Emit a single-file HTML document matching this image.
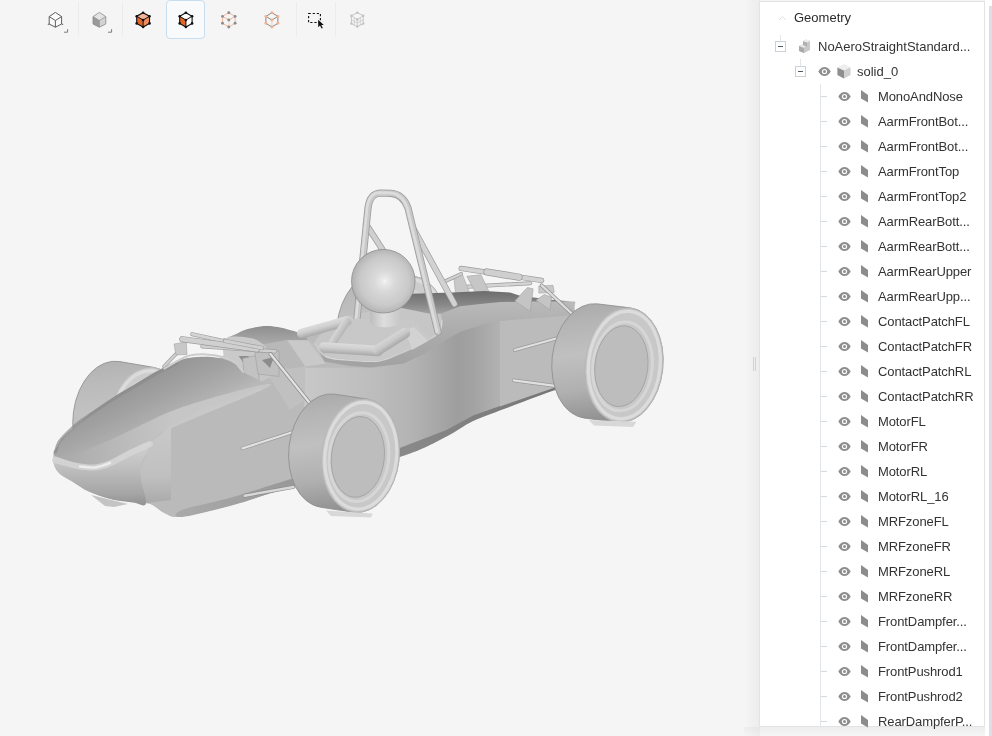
<!DOCTYPE html>
<html><head><meta charset="utf-8">
<style>
html,body{margin:0;padding:0;width:992px;height:736px;overflow:hidden;background:#f5f5f5;font-family:"Liberation Sans",sans-serif;}
#car{position:absolute;left:0;top:0;}
.tsep{position:absolute;top:2px;width:1px;height:34px;background:#ececec;}
#selbtn{position:absolute;left:166px;top:0px;width:39px;height:39px;border:1px solid #c6def0;border-radius:4px;background:#f9fafb;box-sizing:border-box;}
#pshadow{position:absolute;left:744px;top:0;width:16px;height:736px;background:linear-gradient(to right,rgba(0,0,0,0),rgba(0,0,0,0.035));}
#panel{position:absolute;left:759px;top:1px;width:226px;height:726px;background:#fff;border:1px solid #e3e3e3;box-sizing:border-box;}
#pbot{position:absolute;left:744px;top:727px;width:248px;height:9px;background:linear-gradient(to bottom,rgba(0,0,0,0.03),rgba(0,0,0,0));}
#sbtrack{position:absolute;left:985px;top:0;width:7px;height:736px;background:#fff;}
#sbthumb{position:absolute;left:989px;top:6px;width:3px;height:730px;background:#dcdfe4;}
#handle{position:absolute;left:753px;top:357px;width:1px;height:14px;background:#ccd3dc;box-shadow:2px 0 0 #ccd3dc;}
.hdr{position:absolute;left:794px;top:9px;font-size:13px;line-height:18px;color:#2b2b2b;}
.chev{position:absolute;left:778px;top:15px;}
.box{position:absolute;width:11px;height:11px;border:1px solid #c9d1db;box-sizing:border-box;background:#fff;}
.box:after{content:"";position:absolute;left:2px;top:4px;width:5px;height:1px;background:#4f5a66;}
.vl{position:absolute;width:1px;background:#e2e6eb;}
.cr{position:absolute;left:820px;height:25px;width:165px;}
.cr .tk{position:absolute;left:1px;top:12px;width:6px;height:1px;background:#d3d9e0;}
.cr .eye{position:absolute;left:18px;top:8px;}
.cr .face{position:absolute;left:41px;top:6px;}
.cr span{position:absolute;left:58px;top:0;line-height:25px;font-size:13px;letter-spacing:-0.1px;color:#333;white-space:nowrap;}
.nm{position:absolute;font-size:13px;line-height:25px;color:#333;white-space:nowrap;}
.cr,.nm,.hdr{will-change:transform;}
</style></head><body>
<svg id="car" width="760" height="736" viewBox="0 0 760 736" style="position:absolute;left:0;top:0"><defs>
<linearGradient id="gTread" x1="0" y1="0" x2="0.12" y2="1">
  <stop offset="0" stop-color="#a8a8a8"/><stop offset="0.18" stop-color="#b4b4b4"/><stop offset="0.45" stop-color="#c0c0c0"/><stop offset="0.75" stop-color="#b0b0b0"/><stop offset="1" stop-color="#939393"/>
</linearGradient>
<linearGradient id="gTreadFar" x1="0" y1="0" x2="0.12" y2="1">
  <stop offset="0" stop-color="#b0b0b0"/><stop offset="0.2" stop-color="#bababa"/><stop offset="0.45" stop-color="#c2c2c2"/><stop offset="0.75" stop-color="#b4b4b4"/><stop offset="1" stop-color="#9c9c9c"/>
</linearGradient>
<linearGradient id="gSide" x1="0" y1="0" x2="1" y2="0">
  <stop offset="0" stop-color="#c8c8c8"/><stop offset="0.35" stop-color="#bdbdbd"/><stop offset="0.55" stop-color="#b3b3b3"/><stop offset="0.78" stop-color="#9e9e9e"/><stop offset="0.86" stop-color="#a2a2a2"/><stop offset="1" stop-color="#b2b2b2"/>
</linearGradient>
<linearGradient id="gNoseTop" x1="0" y1="0" x2="0.25" y2="1">
  <stop offset="0" stop-color="#9c9c9c"/><stop offset="0.5" stop-color="#a9a9a9"/><stop offset="1" stop-color="#b6b6b6"/>
</linearGradient>
<radialGradient id="gHead" cx="0.52" cy="0.5" r="0.55">
  <stop offset="0" stop-color="#f6f6f6"/><stop offset="0.07" stop-color="#eaeaea"/><stop offset="0.3" stop-color="#d9d9d9"/><stop offset="0.7" stop-color="#c9c9c9"/><stop offset="0.9" stop-color="#b6b6b6"/><stop offset="1" stop-color="#a2a2a2"/>
</radialGradient>
<linearGradient id="gFloor" x1="0" y1="0" x2="1" y2="0">
  <stop offset="0" stop-color="#aaaaaa"/><stop offset="0.5" stop-color="#8c8c8c"/><stop offset="1" stop-color="#727272"/>
</linearGradient>
<linearGradient id="gChin" x1="0" y1="0" x2="0" y2="1">
  <stop offset="0" stop-color="#d2d2d2"/><stop offset="0.35" stop-color="#c2c2c2"/><stop offset="0.8" stop-color="#a6a6a6"/><stop offset="1" stop-color="#929292"/>
</linearGradient>
<linearGradient id="gHump" x1="0" y1="0" x2="0" y2="1">
  <stop offset="0" stop-color="#8e8e8e"/><stop offset="1" stop-color="#ababab"/>
</linearGradient>
<linearGradient id="gDeck" x1="0" y1="0" x2="0" y2="1">
  <stop offset="0" stop-color="#bababa"/><stop offset="1" stop-color="#ababab"/>
</linearGradient>
<linearGradient id="gDark" x1="0" y1="0" x2="0" y2="1">
  <stop offset="0" stop-color="#6c6c6c"/><stop offset="0.6" stop-color="#888888"/><stop offset="1" stop-color="#a2a2a2"/>
</linearGradient>
<linearGradient id="gRim" x1="0" y1="0" x2="0" y2="1">
  <stop offset="0" stop-color="#c0c0c0"/><stop offset="1" stop-color="#a6a6a6"/>
</linearGradient>
<linearGradient id="gRimS" gradientUnits="userSpaceOnUse" x1="0" y1="300" x2="0" y2="368"><stop offset="0" stop-color="#bababa"/><stop offset="0.45" stop-color="#acacac"/><stop offset="1" stop-color="#a2a2a2"/></linearGradient><linearGradient id="gN2" gradientUnits="userSpaceOnUse" x1="122" y1="378" x2="150" y2="436"><stop offset="0" stop-color="#8c8c8c"/><stop offset="0.15" stop-color="#969696"/><stop offset="0.5" stop-color="#a2a2a2"/><stop offset="0.85" stop-color="#b0b0b0"/><stop offset="1" stop-color="#b9b9b9"/></linearGradient><linearGradient id="gNS" gradientUnits="userSpaceOnUse" x1="70" y1="0" x2="175" y2="0"><stop offset="0" stop-color="#acacac"/><stop offset="0.6" stop-color="#bdbdbd"/><stop offset="1" stop-color="#c6c6c6"/></linearGradient><linearGradient id="gLF" gradientUnits="userSpaceOnUse" x1="0" y1="430" x2="0" y2="506"><stop offset="0" stop-color="#c8c8c8"/><stop offset="0.6" stop-color="#c0c0c0"/><stop offset="1" stop-color="#a8a8a8"/></linearGradient><linearGradient id="gNeck" gradientUnits="userSpaceOnUse" x1="370" y1="0" x2="401" y2="0"><stop offset="0" stop-color="#bdbdbd"/><stop offset="0.45" stop-color="#dedede"/><stop offset="1" stop-color="#c6c6c6"/></linearGradient><linearGradient id="tg1" gradientUnits="userSpaceOnUse" x1="323.2" y1="322.4" x2="325.8" y2="332.1"><stop offset="0" stop-color="#dcdcdc"/><stop offset="0.45" stop-color="#cfcfcf"/><stop offset="1" stop-color="#a8a8a8"/></linearGradient><linearGradient id="tg2" gradientUnits="userSpaceOnUse" x1="336.7" y1="329.3" x2="343.3" y2="333.7"><stop offset="0" stop-color="#d8d8d8"/><stop offset="1" stop-color="#b5b5b5"/></linearGradient><linearGradient id="tg3" gradientUnits="userSpaceOnUse" x1="351.3" y1="344.0" x2="350.7" y2="354.5"><stop offset="0" stop-color="#dcdcdc"/><stop offset="0.45" stop-color="#cfcfcf"/><stop offset="1" stop-color="#a8a8a8"/></linearGradient><linearGradient id="tg4" gradientUnits="userSpaceOnUse" x1="388.7" y1="337.1" x2="394.3" y2="345.9"><stop offset="0" stop-color="#d6d6d6"/><stop offset="0.5" stop-color="#c8c8c8"/><stop offset="1" stop-color="#a8a8a8"/></linearGradient></defs>
<path d="M381.40 272.36 L414.40 276.36 A39 58 6 0 1 401.60 391.64 L368.60 387.64 A39 58 6 0 1 381.40 272.36Z" fill="url(#gTreadFar)" stroke="#8c8c8c" stroke-width="0.8"/>
<ellipse cx="408" cy="334" rx="39" ry="58" transform="rotate(6 408 334)" fill="#cdcdcd"/>
<ellipse cx="408.3" cy="334" rx="35.8" ry="54.4" transform="rotate(6 408 334)" fill="none" stroke="#dcdcdc" stroke-width="3.2"/>
<ellipse cx="408" cy="334" rx="38.7" ry="57.7" transform="rotate(6 408 334)" fill="none" stroke="#b0b0b0" stroke-width="0.7"/>
<ellipse cx="406.7" cy="335.5" rx="29.7" ry="44.5" transform="rotate(6 408 334)" fill="none" stroke="#d2d2d2" stroke-width="3"/>
<ellipse cx="405.5" cy="335.5" rx="26.5" ry="40.5" transform="rotate(6 408 334)" fill="#c4c4c4" stroke="#9a9a9a" stroke-width="0.7"/>
<path d="M119.64 361.54 L154.64 367.54 A39 57 6 0 1 139.36 480.46 L104.36 474.46 A39 57 6 0 1 119.64 361.54Z" fill="url(#gTreadFar)" stroke="#8c8c8c" stroke-width="0.8"/>
<ellipse cx="147" cy="424" rx="39" ry="57" transform="rotate(6 147 424)" fill="#cdcdcd"/>
<ellipse cx="147.3" cy="424" rx="35.8" ry="53.4" transform="rotate(6 147 424)" fill="none" stroke="#dcdcdc" stroke-width="3.2"/>
<ellipse cx="147" cy="424" rx="38.7" ry="56.7" transform="rotate(6 147 424)" fill="none" stroke="#b0b0b0" stroke-width="0.7"/>
<ellipse cx="145.7" cy="425.5" rx="29.7" ry="44.5" transform="rotate(6 147 424)" fill="none" stroke="#d0d0d0" stroke-width="3"/>
<ellipse cx="144.5" cy="425.5" rx="26.5" ry="40.5" transform="rotate(6 147 424)" fill="#c2c2c2" stroke="#9a9a9a" stroke-width="0.7"/>
<line x1="445.6" y1="281" x2="461.2" y2="274" stroke="#9a9a9a" stroke-width="3.8" stroke-linecap="round"/><line x1="445.6" y1="281" x2="461.2" y2="274" stroke="#d2d2d2" stroke-width="2.4" stroke-linecap="round"/>
<line x1="466.8" y1="286.8" x2="530.3" y2="283.2" stroke="#9a9a9a" stroke-width="4.0" stroke-linecap="round"/><line x1="466.8" y1="286.8" x2="530.3" y2="283.2" stroke="#d4d4d4" stroke-width="2.5999999999999996" stroke-linecap="round"/>
<path d="M454.0 279.0 L462.6 274.8 L469.6 293.1 L455.5 293.1Z" fill="#c8c8c8" stroke="#a4a4a4" stroke-width="0.6"/>
<path d="M466.8 276.2 L481.0 274.8 L489.4 292.4 L475.3 292.4Z" fill="#c6c6c6" stroke="#a4a4a4" stroke-width="0.6"/>
<line x1="461.2" y1="268.4" x2="541.6" y2="280.4" stroke="#9a9a9a" stroke-width="5.4" stroke-linecap="round"/><line x1="461.2" y1="268.4" x2="541.6" y2="280.4" stroke="#d2d2d2" stroke-width="4.0" stroke-linecap="round"/>
<line x1="487" y1="272" x2="519" y2="277.2" stroke="#9a9a9a" stroke-width="7.2" stroke-linecap="round"/><line x1="487" y1="272" x2="519" y2="277.2" stroke="#cfcfcf" stroke-width="5.8" stroke-linecap="round"/>
<path d="M538.8 286.0 L553.0 285.3 L554.3 292.4 L538.8 293.1Z" fill="#c8c8c8" stroke="#a4a4a4" stroke-width="0.6"/>
<path d="M53.3 458.0 C53.4 455.3 54.1 452.2 55.0 450.0 C55.9 447.8 57.2 446.5 58.5 444.5 C59.8 442.5 59.5 441.3 62.7 438.0 C65.9 434.7 72.6 429.0 77.5 424.7 C82.4 420.4 86.3 416.6 92.3 412.0 C98.3 407.4 106.4 401.8 113.5 397.2 C120.6 392.6 127.6 388.7 134.7 384.5 C141.8 380.3 148.8 375.7 155.8 371.8 C162.9 367.9 170.0 363.7 177.0 361.2 C184.0 358.7 191.0 357.5 198.0 357.0 C205.0 356.5 214.0 359.2 219.0 358.0 C224.0 356.8 223.3 354.5 228.0 350.0 C232.7 345.5 240.8 334.9 247.0 331.0 C253.2 327.1 259.3 326.9 265.0 326.5 C270.7 326.1 275.7 327.5 281.0 328.5 C286.3 329.5 287.2 333.7 297.0 332.6 C306.8 331.5 322.3 326.1 340.0 322.0 C357.7 317.9 389.7 310.3 403.0 308.0 C416.3 305.7 413.2 308.3 420.0 308.0 C426.8 307.7 435.7 307.0 444.0 306.0 C452.3 305.0 460.7 302.8 470.0 302.0 C479.3 301.2 483.7 301.2 500.0 301.0 C516.3 300.8 555.5 299.2 568.0 301.0 C580.5 302.8 573.0 298.3 575.0 312.0 C577.0 325.7 583.3 370.0 580.0 383.0 C576.7 396.0 566.2 386.2 555.0 390.0 C543.8 393.8 526.7 400.3 513.0 405.5 C499.3 410.7 484.1 415.8 473.0 421.0 C461.9 426.2 458.5 430.6 446.5 436.5 C434.5 442.4 426.9 448.1 401.0 456.5 C375.1 464.9 319.0 478.9 291.0 487.0 C263.0 495.1 251.2 500.1 233.0 505.0 C214.8 509.9 193.2 515.0 182.0 516.5 C170.8 518.0 171.3 516.1 166.0 514.0 C160.7 511.9 155.4 505.9 150.0 504.0 C144.6 502.1 140.2 503.2 133.6 502.4 C127.0 501.5 118.0 500.7 110.6 498.9 C103.2 497.1 95.9 494.8 89.4 491.8 C82.9 488.9 76.7 484.2 71.8 481.2 C66.9 478.2 62.9 476.5 60.0 474.0 C57.1 471.5 55.6 468.7 54.5 466.0 C53.4 463.3 53.2 460.7 53.3 458.0Z" fill="#bababa" />
<path d="M182.0 517.0 C190.5 516.2 214.8 510.0 233.0 505.0 C251.2 500.0 263.0 495.1 291.0 487.0 C319.0 478.9 375.1 464.9 401.0 456.5 C426.9 448.1 434.5 442.4 446.5 436.5 C458.5 430.6 461.9 426.2 473.0 421.0 C484.1 415.8 499.3 410.7 513.0 405.5 C526.7 400.3 543.8 393.8 555.0 390.0 C566.2 386.2 575.8 385.2 580.0 383.0 C584.2 380.8 584.2 376.4 580.0 377.0 C575.8 377.6 566.2 382.6 555.0 386.6 C543.8 390.6 526.7 396.4 513.0 401.0 C499.3 405.6 484.1 409.8 473.0 414.4 C461.9 419.0 458.5 423.4 446.5 428.8 C434.5 434.2 426.9 438.1 401.0 446.5 C375.1 454.9 319.0 470.6 291.0 479.0 C263.0 487.4 251.2 491.8 233.0 497.0 C214.8 502.2 190.5 506.7 182.0 510.0 C173.5 513.3 173.5 517.8 182.0 517.0Z" fill="url(#gFloor)" />
<path d="M304.5 367.7 L338.0 367.7 L370.6 368.5 L403.0 363.7 L424.0 353.0 L440.0 342.0 L457.6 333.0 L470.0 326.0 L480.0 323.0 L500.0 321.0 L500.0 406.0 L473.0 415.5 L446.5 430.0 L424.0 438.5 L401.0 447.5 L304.0 477.0Z" fill="url(#gSide)" />
<path d="M500.0 321.0 L568.5 315.5 L575.0 313.0 L580.0 378.0 L555.0 387.5 L513.0 402.0 L500.0 406.5Z" fill="#bbbbbb" />
<path d="M314.0 343.5 C315.8 337.5 329.2 326.2 338.0 321.0 C346.8 315.8 356.6 314.2 367.0 312.0 C377.4 309.8 390.3 307.6 400.4 307.8 C410.5 308.0 420.9 312.3 427.6 313.3 C434.3 314.3 438.3 312.7 440.7 313.8 C443.1 314.9 442.4 316.8 442.0 320.0 C441.6 323.2 442.7 328.7 438.5 333.0 C434.3 337.3 423.9 342.1 416.7 345.9 C409.4 349.7 401.3 353.2 395.0 355.7 C388.7 358.2 385.4 360.2 378.7 361.0 C371.9 361.8 363.1 361.2 354.5 360.5 C345.9 359.8 333.8 359.8 327.0 357.0 C320.2 354.2 312.2 349.5 314.0 343.5Z" fill="#c6c6c6" />
<path d="M440.7 313.8 L460.2 306.2 L485.0 303.5 L500.6 302.0 L533.0 301.5 L568.4 301.5 L575.0 312.0 L568.5 315.5 L500.0 321.0 L485.0 324.0 L460.2 331.7 L440.7 343.0 L424.0 354.0 L403.0 363.7 L370.6 367.5 L350.0 366.0 L324.3 361.6 L314.8 344.0 L327.0 357.0 L354.5 360.5 L378.7 361.0 L395.0 355.7 L416.7 345.9 L438.5 333.0 L442.0 320.0Z" fill="url(#gRimS)" />
<path d="M314.8 344.0 C316.8 346.2 320.4 354.2 327.0 357.0 C333.6 359.8 345.9 359.8 354.5 360.5 C363.1 361.2 371.9 361.8 378.7 361.0 C385.4 360.2 388.7 358.2 395.0 355.7 C401.3 353.2 409.4 349.7 416.7 345.9 C423.9 342.1 434.3 337.3 438.5 333.0 C442.7 328.7 441.4 322.2 442.0 320.0" fill="none" stroke="#d6d6d6" stroke-width="1.4"/>
<path d="M404.0 294.0 L452.0 292.6 L484.5 291.0 L510.0 292.6 L520.0 295.8 L552.0 299.8 L568.4 301.5 L533.0 301.5 L500.6 302.0 L485.0 303.5 L460.2 306.2 L440.7 313.8 L427.6 313.3 L400.4 307.8Z" fill="url(#gDark)" />
<path d="M514.8 300.9 L527.5 287.5 L533.1 288.9 L530.3 311.4Z" fill="#c4c4c4" stroke="#a0a0a0" stroke-width="0.6"/>
<path d="M536.0 300.2 L544.4 294.5 L551.5 297.3 L550.0 310.0Z" fill="#c4c4c4" stroke="#a0a0a0" stroke-width="0.6"/>
<path d="M223.5 339.0 L250.7 338.0 L276.0 350.0 L305.0 369.0 L283.0 372.0 L260.0 382.0 L243.5 376.0Z" fill="#c6c6c6" />
<path d="M300.0 334.0 L315.0 344.0 L325.4 363.4 L305.2 366.5 L305.0 400.0 L290.0 410.0 L270.0 378.0Z" fill="#c0c0c0" />
<path d="M222.0 340.0 C223.4 339.4 230.9 336.3 235.0 334.5 C239.1 332.7 241.5 330.6 246.8 329.2 C252.1 327.8 260.3 326.1 267.0 326.1 C273.7 326.1 281.6 328.0 287.0 329.2 C292.4 330.4 295.8 331.4 299.2 333.2 C302.6 335.0 309.3 339.0 307.3 340.2 C305.3 341.4 294.4 339.5 287.0 340.2 C279.6 340.9 268.9 344.6 262.9 344.3 C256.9 344.0 256.9 339.2 250.8 338.2 C244.8 337.1 231.4 337.7 226.6 338.0 C221.8 338.3 220.6 340.6 222.0 340.0Z" fill="url(#gHump)" />
<path d="M287.0 340.2 L307.3 340.2 L325.4 363.4 L305.2 366.5Z" fill="#c9c9c9" />
<path d="M262.9 344.3 L287.0 340.2 L305.2 366.5 L291.0 368.5 L273.0 368.5Z" fill="#b8b8b8" />
<path d="M226.6 338.0 C231.1 335.0 244.8 337.1 250.8 338.2 C256.9 339.2 259.5 341.3 262.9 344.3 C266.3 347.3 269.3 352.4 271.0 356.4 C272.7 360.4 275.2 365.6 273.0 368.5 C270.8 371.4 263.3 373.3 258.0 374.0 C252.7 374.7 244.7 374.2 241.0 372.5 C237.3 370.8 238.8 366.8 236.0 364.0 C233.2 361.2 225.6 360.3 224.0 356.0 C222.4 351.7 222.1 341.0 226.6 338.0Z" fill="#cacaca" />
<path d="M238.7 356.0 L248.8 356.0 L248.8 370.5Z" fill="#8e8e8e" />
<path d="M242.7 358.4 L258.9 355.0 L258.9 382.6 L244.0 376.0Z" fill="#c2c2c2" stroke="#a0a0a0" stroke-width="0.6"/>
<path d="M254.8 352.3 L279.0 351.0 L279.0 376.5 L258.0 374.0Z" fill="#c0c0c0" stroke="#a0a0a0" stroke-width="0.6"/>
<path d="M262.0 360.0 L274.0 357.0 L270.0 368.0Z" fill="#8c8c8c" />
<line x1="164.1" y1="366.5" x2="184.3" y2="345.3" stroke="#a0a0a0" stroke-width="3.8" stroke-linecap="round"/><line x1="164.1" y1="366.5" x2="184.3" y2="345.3" stroke="#cfcfcf" stroke-width="2.4" stroke-linecap="round"/>
<path d="M174.0 344.0 L186.3 342.0 L187.0 354.4 L176.0 355.0Z" fill="#c8c8c8" stroke="#a4a4a4" stroke-width="0.6"/>
<line x1="202.4" y1="346.3" x2="275" y2="351.3" stroke="#9e9e9e" stroke-width="4.2" stroke-linecap="round"/><line x1="202.4" y1="346.3" x2="275" y2="351.3" stroke="#d0d0d0" stroke-width="2.8" stroke-linecap="round"/>
<line x1="192.3" y1="334.2" x2="224.6" y2="341.3" stroke="#a0a0a0" stroke-width="4.2" stroke-linecap="round"/><line x1="192.3" y1="334.2" x2="224.6" y2="341.3" stroke="#d4d4d4" stroke-width="2.8" stroke-linecap="round"/>
<line x1="182.3" y1="339.2" x2="256.9" y2="349.3" stroke="#9c9c9c" stroke-width="6.2" stroke-linecap="round"/><line x1="182.3" y1="339.2" x2="256.9" y2="349.3" stroke="#d0d0d0" stroke-width="4.8" stroke-linecap="round"/>
<line x1="225" y1="341" x2="262" y2="348" stroke="#a0a0a0" stroke-width="4.2" stroke-linecap="round"/><line x1="225" y1="341" x2="262" y2="348" stroke="#d0d0d0" stroke-width="2.8" stroke-linecap="round"/>
<path d="M55.0 450.0 C55.8 448.8 57.2 446.5 58.5 444.5 C59.8 442.5 59.5 441.3 62.7 438.0 C65.9 434.7 72.6 429.0 77.5 424.7 C82.4 420.4 86.3 416.6 92.3 412.0 C98.3 407.4 106.4 401.8 113.5 397.2 C120.6 392.6 127.6 388.7 134.7 384.5 C141.8 380.3 148.8 375.7 155.8 371.8 C162.9 367.9 170.0 363.7 177.0 361.2 C184.0 358.7 191.0 357.5 198.0 357.0 C205.0 356.5 213.0 356.9 219.0 358.0 C225.0 359.1 230.1 361.0 234.0 363.3 C237.9 365.6 237.9 368.7 242.6 371.8 C247.3 374.9 258.8 379.5 262.0 382.0 C265.2 384.5 272.3 382.3 262.0 387.0 C251.7 391.7 215.2 403.5 200.0 410.0 C184.8 416.5 179.3 420.5 171.0 426.0 C162.7 431.5 157.1 438.8 150.0 443.0 C142.9 447.2 134.9 448.2 128.3 451.2 C121.7 454.2 116.5 458.5 110.6 461.0 C104.7 463.5 98.9 465.9 93.0 466.2 C87.1 466.5 81.2 464.6 75.0 463.0 C68.8 461.4 59.6 458.3 56.0 456.5 C52.4 454.7 53.8 453.1 53.6 452.0 C53.4 450.9 54.2 451.2 55.0 450.0Z" fill="url(#gN2)" />
<path d="M55.5 452.0 C56.1 450.3 56.8 445.5 59.0 442.0 C61.2 438.5 65.5 434.4 69.0 431.0 C72.5 427.6 76.1 424.5 80.0 421.5 C83.9 418.5 86.7 416.8 92.3 413.0 C97.9 409.2 106.4 403.4 113.5 399.0 C120.6 394.6 127.6 390.7 134.7 386.5 C141.8 382.3 148.8 377.8 155.8 374.0 C162.9 370.2 173.5 365.2 177.0 363.5" fill="none" stroke="#8a8a8a" stroke-width="3" stroke-linecap="round" opacity="0.7"/>
<path d="M60.0 457.0 C59.5 455.8 63.7 458.3 72.0 455.5 C80.3 452.7 94.2 447.1 110.0 440.0 C125.8 432.9 150.3 419.9 167.0 413.0 C183.7 406.1 194.2 403.2 210.0 398.5 C225.8 393.8 253.3 386.4 262.0 385.0 C270.7 383.6 277.2 382.8 262.0 390.0 C246.8 397.2 189.7 419.2 171.0 428.0 C152.3 436.8 157.1 439.1 150.0 443.0 C142.9 446.9 134.9 448.2 128.3 451.2 C121.7 454.2 116.5 458.5 110.6 461.0 C104.7 463.5 98.9 465.9 93.0 466.2 C87.1 466.5 80.5 464.5 75.0 463.0 C69.5 461.5 60.5 458.2 60.0 457.0Z" fill="url(#gNS)" />
<path d="M163.6 369.0 C167.5 366.9 180.2 358.7 187.2 356.3 C194.2 353.9 199.3 354.2 205.4 354.4 C211.5 354.5 218.4 355.7 223.5 357.2 C228.6 358.7 232.9 360.9 236.2 363.5 C239.5 366.1 242.3 371.1 243.5 372.6" fill="none" stroke="#cdcdcd" stroke-width="2"/>
<path d="M150.0 443.0 L171.0 426.0 L200.0 410.0 L262.0 387.0 L262.0 390.0 L171.0 428.0 L171.0 500.0 L146.0 503.0 L140.0 470.0Z" fill="url(#gLF)" />
<path d="M53.6 456.0 C53.9 454.4 52.4 455.3 56.0 456.5 C59.6 457.7 68.8 461.4 75.0 463.0 C81.2 464.6 87.1 466.5 93.0 466.2 C98.9 465.9 104.7 463.5 110.6 461.0 C116.5 458.5 121.7 454.2 128.3 451.2 C134.9 448.2 148.1 439.9 150.0 443.0 C151.9 446.1 140.7 460.0 140.0 470.0 C139.3 480.0 147.1 497.6 146.0 503.0 C144.9 508.4 139.5 503.1 133.6 502.4 C127.7 501.7 118.0 500.7 110.6 498.9 C103.2 497.1 95.9 494.8 89.4 491.8 C82.9 488.9 76.7 484.2 71.8 481.2 C66.9 478.2 62.9 476.5 60.0 474.0 C57.1 471.5 55.6 469.0 54.5 466.0 C53.4 463.0 53.4 457.6 53.6 456.0Z" fill="url(#gChin)" />
<path d="M55.0 460.0 C58.3 460.9 68.3 464.2 75.0 465.5 C81.7 466.8 88.8 468.0 95.0 467.5 C101.2 467.0 106.2 464.9 112.0 462.5 C117.8 460.1 123.7 456.1 130.0 453.0 C136.3 449.9 146.7 445.5 150.0 444.0" fill="none" stroke="#d6d6d6" stroke-width="6" stroke-linecap="round" opacity="0.8"/>
<path d="M80.0 466.5 C82.5 466.7 90.0 468.1 95.0 467.5 C100.0 466.9 107.5 463.8 110.0 463.0" fill="none" stroke="#ececec" stroke-width="2.4" stroke-linecap="round"/>
<path d="M91.0 495.0 L105.0 506.0 L114.0 507.0 L128.0 504.0Z" fill="#c4c4c4" />
<line x1="366" y1="224" x2="384" y2="252" stroke="#9c9c9c" stroke-width="6.2" stroke-linecap="round"/><line x1="366" y1="224" x2="384" y2="252" stroke="#d0d0d0" stroke-width="4.8" stroke-linecap="round"/>
<line x1="413" y1="228" x2="454.5" y2="304" stroke="#9c9c9c" stroke-width="6.2" stroke-linecap="round"/><line x1="413" y1="228" x2="454.5" y2="304" stroke="#d2d2d2" stroke-width="4.8" stroke-linecap="round"/>
<path d="M357 318 L368 208 C369.5 197 374 193 381 193 L391 193.3 C399 193.8 404.5 198.5 408 208 L438 332" fill="none" stroke="#9c9c9c" stroke-width="7.2" stroke-linecap="round"/>
<path d="M357 318 L368 208 C369.5 197 374 193 381 193 L391 193.3 C399 193.8 404.5 198.5 408 208 L438 332" fill="none" stroke="#c8c8c8" stroke-width="5.6" stroke-linecap="round"/>
<path d="M357 318 L368 208 C369.5 197 374 193 381 193 L391 193.3 C399 193.8 404.5 198.5 408 208 L438 332" fill="none" stroke="#dcdcdc" stroke-width="2.6" stroke-linecap="round" transform="translate(-0.9,-0.4)"/>
<path d="M347.0 318.5 L414.0 320.0 L424.0 332.0 L432.0 338.0 L416.7 345.9 L395.0 355.7 L378.7 361.0 L354.5 360.5 L330.0 357.0Z" fill="#c8c8c8" />
<path d="M405.0 330.0 L414.0 327.0 L428.0 341.0 L412.0 350.0Z" fill="#d2d2d2" />
<path d="M370 300 L401 300 L401 322 C395 329 376 329 370 322 Z" fill="url(#gNeck)" />
<circle cx="383.3" cy="281.2" r="31.8" fill="url(#gHead)" stroke="#8e8e8e" stroke-width="0.8"/>
<line x1="302" y1="333.5" x2="347" y2="321" stroke="url(#tg1)" stroke-width="10" stroke-linecap="round"/>
<line x1="347" y1="321" x2="333" y2="342" stroke="url(#tg2)" stroke-width="8" stroke-linecap="round"/>
<line x1="324" y1="347.5" x2="378" y2="351" stroke="url(#tg3)" stroke-width="10.5" stroke-linecap="round"/>
<line x1="378" y1="350" x2="405" y2="333" stroke="url(#tg4)" stroke-width="10.5" stroke-linecap="round"/>
<line x1="270.5" y1="354" x2="310.5" y2="404" stroke="#8a8a8a" stroke-width="3.8" stroke-linecap="round"/><line x1="270.5" y1="354" x2="310.5" y2="404" stroke="#e2e2e2" stroke-width="2.4" stroke-linecap="round"/>
<line x1="242.4" y1="448.4" x2="292.9" y2="432" stroke="#9a9a9a" stroke-width="3.5999999999999996" stroke-linecap="round"/><line x1="242.4" y1="448.4" x2="292.9" y2="432" stroke="#e0e0e0" stroke-width="2.1999999999999997" stroke-linecap="round"/>
<line x1="244.6" y1="495.7" x2="293.5" y2="487" stroke="#8a8a8a" stroke-width="3.8" stroke-linecap="round"/><line x1="244.6" y1="495.7" x2="293.5" y2="487" stroke="#d8d8d8" stroke-width="2.4" stroke-linecap="round"/>
<line x1="514.8" y1="350" x2="558" y2="338" stroke="#9a9a9a" stroke-width="3.5999999999999996" stroke-linecap="round"/><line x1="514.8" y1="350" x2="558" y2="338" stroke="#e0e0e0" stroke-width="2.1999999999999997" stroke-linecap="round"/>
<line x1="513.7" y1="380.4" x2="555" y2="385.9" stroke="#9a9a9a" stroke-width="3.5999999999999996" stroke-linecap="round"/><line x1="513.7" y1="380.4" x2="555" y2="385.9" stroke="#e0e0e0" stroke-width="2.1999999999999997" stroke-linecap="round"/>
<line x1="541.6" y1="285.3" x2="574" y2="315.7" stroke="#8e8e8e" stroke-width="3.8" stroke-linecap="round"/><line x1="541.6" y1="285.3" x2="574" y2="315.7" stroke="#dcdcdc" stroke-width="2.4" stroke-linecap="round"/>
<path d="M334.47 394.14 L367.47 399.14 A39 57 6 0 1 353.53 512.26 L320.53 507.26 A39 57 6 0 1 334.47 394.14Z" fill="url(#gTread)" stroke="#8c8c8c" stroke-width="0.8"/>
<ellipse cx="360.5" cy="455.7" rx="39" ry="57" transform="rotate(6 360.5 455.7)" fill="#c8c8c8"/>
<ellipse cx="360.8" cy="455.7" rx="35.8" ry="53.4" transform="rotate(6 360.5 455.7)" fill="none" stroke="#dcdcdc" stroke-width="3.2"/>
<ellipse cx="360.5" cy="455.7" rx="38.7" ry="56.7" transform="rotate(6 360.5 455.7)" fill="none" stroke="#b0b0b0" stroke-width="0.7"/>
<ellipse cx="359.2" cy="457.2" rx="29.7" ry="44.5" transform="rotate(6 360.5 455.7)" fill="none" stroke="#d6d6d6" stroke-width="3"/>
<ellipse cx="358.0" cy="457.2" rx="26.5" ry="40.5" transform="rotate(6 360.5 455.7)" fill="#bdbdbd" stroke="#9a9a9a" stroke-width="0.7"/>
<path d="M597.35 303.85 L630.35 307.85 A39 57.5 6 0 1 617.65 422.15 L584.65 418.15 A39 57.5 6 0 1 597.35 303.85Z" fill="url(#gTread)" stroke="#8c8c8c" stroke-width="0.8"/>
<ellipse cx="624" cy="365" rx="39" ry="57.5" transform="rotate(6 624 365)" fill="#c8c8c8"/>
<ellipse cx="624.3" cy="365" rx="35.8" ry="53.9" transform="rotate(6 624 365)" fill="none" stroke="#dcdcdc" stroke-width="3.2"/>
<ellipse cx="624" cy="365" rx="38.7" ry="57.2" transform="rotate(6 624 365)" fill="none" stroke="#b0b0b0" stroke-width="0.7"/>
<ellipse cx="622.7" cy="366.5" rx="29.7" ry="44.5" transform="rotate(6 624 365)" fill="none" stroke="#d6d6d6" stroke-width="3"/>
<ellipse cx="621.5" cy="366.5" rx="26.5" ry="40.5" transform="rotate(6 624 365)" fill="#bdbdbd" stroke="#9a9a9a" stroke-width="0.7"/>
<path d="M325.9 510.4 L372.7 513.5 L371.0 517.6 L331.0 516.0Z" fill="#d8d8d8" />
<path d="M588.8 420.0 L636.5 421.8 L633.0 427.0 L594.0 425.6Z" fill="#d8d8d8" /></svg>
<div id="tb">
<div id="selbtn"></div>
<div class="tsep" style="left:78px"></div>
<div class="tsep" style="left:122px"></div>
<div class="tsep" style="left:296px"></div>
<div class="tsep" style="left:335px"></div>
<svg id="tbicons" width="380" height="40" viewBox="0 0 380 40" style="position:absolute;left:0;top:0"><polygon points="55.40,12.40 61.60,16.60 61.60,24.00 55.40,27.20 49.20,24.00 49.20,16.60" fill="#fbfbfb" stroke="#5e5e5e" stroke-width="1"/><polyline points="49.20,16.60 55.40,20.50 61.60,16.60" fill="none" stroke="#5e5e5e" stroke-width="1"/><line x1="55.4" y1="20.5" x2="55.4" y2="27.2" stroke="#5e5e5e" stroke-width="1"/><line x1="47.8" y1="24.5" x2="49.5" y2="24" stroke="#5e5e5e" stroke-width="1"/><line x1="61.5" y1="24" x2="63.2" y2="24.5" stroke="#5e5e5e" stroke-width="1"/><polyline points="64,32.2 67.6,32.2 67.6,29.2" fill="none" stroke="#7a7a7a" stroke-width="1"/><polygon points="99.40,12.40 105.80,16.60 99.40,20.50 93.00,16.60" fill="#e4e4e4"/><polygon points="93.00,16.60 99.40,20.50 99.40,27.20 93.00,24.00" fill="#9a9a9a"/><polygon points="99.40,20.50 105.80,16.60 105.80,24.00 99.40,27.20" fill="#d2d2d2"/><polygon points="99.40,12.40 105.80,16.60 105.80,24.00 99.40,27.20 93.00,24.00 93.00,16.60" fill="none" stroke="#8a8a8a" stroke-width="0.8"/><polyline points="93.00,16.60 99.40,20.50 105.80,16.60" fill="none" stroke="#8a8a8a" stroke-width="0.7"/><line x1="99.4" y1="20.5" x2="99.4" y2="27.2" stroke="#8a8a8a" stroke-width="0.7"/><polyline points="108,32.2 111.6,32.2 111.6,29.2" fill="none" stroke="#7a7a7a" stroke-width="1"/><polygon points="143.10,12.70 149.50,16.20 143.10,20.10 136.70,16.20" fill="#f3b397"/><polygon points="136.70,16.20 143.10,20.10 143.10,27.00 136.70,23.40" fill="#e3652b"/><polygon points="143.10,20.10 149.50,16.20 149.50,23.40 143.10,27.00" fill="#ef8d5c"/><polygon points="143.10,12.70 149.50,16.20 149.50,23.40 143.10,27.00 136.70,23.40 136.70,16.20" fill="none" stroke="#111" stroke-width="1.1"/><polyline points="136.70,16.20 143.10,20.10 149.50,16.20" fill="none" stroke="#111" stroke-width="1"/><line x1="143.1" y1="20.1" x2="143.1" y2="27" stroke="#111" stroke-width="1"/><circle cx="143.1" cy="12.7" r="1.3" fill="#111"/><circle cx="136.7" cy="16.2" r="1.3" fill="#111"/><circle cx="149.5" cy="16.2" r="1.3" fill="#111"/><circle cx="143.1" cy="20.1" r="1.3" fill="#111"/><circle cx="136.7" cy="23.4" r="1.3" fill="#111"/><circle cx="149.5" cy="23.4" r="1.3" fill="#111"/><circle cx="143.1" cy="27" r="1.3" fill="#111"/><polygon points="185.90,12.70 192.10,16.20 192.10,23.40 185.90,27.00 179.70,23.40 179.70,16.20" fill="#ffffff"/><polygon points="179.70,16.20 185.90,20.10 185.90,27.00 179.70,23.40" fill="#e3652b"/><polygon points="185.90,12.70 192.10,16.20 192.10,23.40 185.90,27.00 179.70,23.40 179.70,16.20" fill="none" stroke="#111" stroke-width="1.1"/><polyline points="179.70,16.20 185.90,20.10 192.10,16.20" fill="none" stroke="#111" stroke-width="1"/><line x1="185.9" y1="20.1" x2="185.9" y2="27" stroke="#111" stroke-width="1"/><circle cx="185.9" cy="12.7" r="1.3" fill="#111"/><circle cx="179.70000000000002" cy="16.2" r="1.3" fill="#111"/><circle cx="192.1" cy="16.2" r="1.3" fill="#111"/><circle cx="185.9" cy="20.1" r="1.3" fill="#111"/><circle cx="179.70000000000002" cy="23.4" r="1.3" fill="#111"/><circle cx="192.1" cy="23.4" r="1.3" fill="#111"/><circle cx="185.9" cy="27" r="1.3" fill="#111"/><polygon points="228.80,12.70 235.10,16.40 235.10,23.30 228.80,27.00 222.50,23.30 222.50,16.40" fill="none" stroke="#f1b191" stroke-width="0.9"/><polyline points="222.50,16.40 228.80,20.00 235.10,16.40" fill="none" stroke="#f1b191" stroke-width="0.9"/><line x1="228.8" y1="20" x2="228.8" y2="27" stroke="#f3d3c3" stroke-width="0.8"/><circle cx="228.8" cy="12.7" r="1.45" fill="#8c8c8c"/><circle cx="222.5" cy="16.4" r="1.45" fill="#8c8c8c"/><circle cx="235.10000000000002" cy="16.4" r="1.45" fill="#8c8c8c"/><circle cx="228.8" cy="20" r="1.45" fill="#8c8c8c"/><circle cx="222.5" cy="23.3" r="1.45" fill="#8c8c8c"/><circle cx="235.10000000000002" cy="23.3" r="1.45" fill="#8c8c8c"/><circle cx="228.8" cy="27" r="1.45" fill="#8c8c8c"/><polygon points="271.90,12.70 277.90,16.40 277.90,23.30 271.90,27.00 265.90,23.30 265.90,16.40" fill="none" stroke="#7c7c7c" stroke-width="0.9"/><polyline points="265.90,16.40 271.90,20.00 277.90,16.40" fill="none" stroke="#7c7c7c" stroke-width="0.9"/><line x1="271.9" y1="20" x2="271.9" y2="27" stroke="#dcdcdc" stroke-width="1.2"/><circle cx="271.9" cy="12.7" r="1.45" fill="#f2b191"/><circle cx="265.9" cy="16.4" r="1.45" fill="#f2b191"/><circle cx="277.9" cy="16.4" r="1.45" fill="#f2b191"/><circle cx="271.9" cy="20" r="1.45" fill="#f2b191"/><circle cx="265.9" cy="23.3" r="1.45" fill="#f2b191"/><circle cx="277.9" cy="23.3" r="1.45" fill="#f2b191"/><circle cx="271.9" cy="27" r="1.45" fill="#f2b191"/><rect x="308.6" y="13.5" width="11.8" height="9" fill="none" stroke="#111" stroke-width="1.1" stroke-dasharray="2.2,1.9"/><path d="M318.2 19.8 L318.2 27.2 L320 25.5 L321.6 28.5 L322.8 27.9 L321.3 25 L323.8 25 Z" fill="#111"/><polygon points="357.30,12.60 363.20,15.80 363.20,23.60 357.30,26.60 351.40,23.60 351.40,15.80" fill="none" stroke="#c4c4c4" stroke-width="1"/><polyline points="351.40,15.80 357.30,19.50 363.20,15.80" fill="none" stroke="#c4c4c4" stroke-width="0.8"/><line x1="357.3" y1="19.5" x2="357.3" y2="26.6" stroke="#c4c4c4" stroke-width="0.8"/><line x1="354.3" y1="17.5" x2="354.3" y2="25" stroke="#c4c4c4" stroke-width="0.7"/><line x1="360.3" y1="17.5" x2="360.3" y2="25" stroke="#c4c4c4" stroke-width="0.7"/><line x1="351.4" y1="19.8" x2="357.3" y2="23" stroke="#c4c4c4" stroke-width="0.7"/><line x1="357.3" y1="23" x2="363.2" y2="19.8" stroke="#c4c4c4" stroke-width="0.7"/><circle cx="357.3" cy="12.6" r="1.2" fill="#c0c0c0"/><circle cx="351.40000000000003" cy="15.8" r="1.2" fill="#c0c0c0"/><circle cx="363.2" cy="15.8" r="1.2" fill="#c0c0c0"/><circle cx="357.3" cy="19.5" r="1.2" fill="#c0c0c0"/><circle cx="351.40000000000003" cy="23.6" r="1.2" fill="#c0c0c0"/><circle cx="363.2" cy="23.6" r="1.2" fill="#c0c0c0"/><circle cx="357.3" cy="26.6" r="1.2" fill="#c0c0c0"/></svg>
</div>
<div id="pshadow"></div>
<div id="pbot"></div>
<div id="panel"></div>
<div id="sbtrack"></div>
<div id="sbthumb"></div>
<div id="handle"></div>
<svg class="chev" width="9" height="6" viewBox="0 0 9 6"><path d="M1 5L4.5 1.5L8 5" fill="none" stroke="#dde2e8" stroke-width="1"/></svg>
<div class="hdr">Geometry</div>
<div class="vl" style="left:780px;top:35px;height:6px"></div>
<div class="box" style="left:775px;top:41px"></div>
<svg style="position:absolute;left:798px;top:39px" width="13" height="15" viewBox="0 0 13 15"><path d="M5 2L8 0.5L12 2V11L6 14L1 12V7L5 5Z" fill="#c9c9c9"/><path d="M1 7L5 5L9 7L6 8.5Z" fill="#e9e9e9"/><path d="M5 2L8 0.5L12 2L9 3.5Z" fill="#eeeeee"/><path d="M1 7L6 9.5V14L1 12Z" fill="#a9a9a9"/><path d="M5 2.5L9 3.5V8L5 6Z" fill="#b0b0b0"/></svg>
<div class="nm" style="left:818px;top:34px">NoAeroStraightStandard...</div>
<div class="vl" style="left:800px;top:59px;height:7px"></div>
<div class="box" style="left:795px;top:66px"></div>
<svg style="position:absolute;left:818px;top:67px" width="13" height="9" viewBox="0 0 13 9"><path d="M0.3 4.5C2 1.3 4.2 0 6.5 0S11 1.3 12.7 4.5C11 7.7 8.8 9 6.5 9S2 7.7 0.3 4.5Z" fill="#8f8f8f"/><circle cx="6.5" cy="4.5" r="2.6" fill="#fff"/><circle cx="6.5" cy="4.5" r="1.5" fill="#8f8f8f"/></svg>
<svg style="position:absolute;left:837px;top:64px" width="14" height="15" viewBox="0 0 14 15"><path d="M7 0.5L13.5 3.5V11L7 14.5L0.5 11V3.5Z" fill="#cfcfcf"/><path d="M0.5 3.5L7 6.5V14.5L0.5 11Z" fill="#8e8e8e"/><path d="M7 0.5L13.5 3.5L7 6.5L0.5 3.5Z" fill="#efefef"/></svg>
<div class="nm" style="left:857px;top:59px">solid_0</div>
<div class="vl" style="left:820px;top:84px;height:643px"></div>
<div class="cr" style="top:84px"><i class="tk"></i><svg class="eye" width="13" height="9" viewBox="0 0 13 9"><path d="M0.3 4.5C2 1.3 4.2 0 6.5 0S11 1.3 12.7 4.5C11 7.7 8.8 9 6.5 9S2 7.7 0.3 4.5Z" fill="#8f8f8f"/><circle cx="6.5" cy="4.5" r="2.6" fill="#fff"/><circle cx="6.5" cy="4.5" r="1.5" fill="#8f8f8f"/></svg><svg class="face" width="8" height="13" viewBox="0 0 8 13"><path d="M0 0L7 5V12.5L0 8.5Z" fill="#8c8c8c"/></svg><span>MonoAndNose</span></div>
<div class="cr" style="top:109px"><i class="tk"></i><svg class="eye" width="13" height="9" viewBox="0 0 13 9"><path d="M0.3 4.5C2 1.3 4.2 0 6.5 0S11 1.3 12.7 4.5C11 7.7 8.8 9 6.5 9S2 7.7 0.3 4.5Z" fill="#8f8f8f"/><circle cx="6.5" cy="4.5" r="2.6" fill="#fff"/><circle cx="6.5" cy="4.5" r="1.5" fill="#8f8f8f"/></svg><svg class="face" width="8" height="13" viewBox="0 0 8 13"><path d="M0 0L7 5V12.5L0 8.5Z" fill="#8c8c8c"/></svg><span>AarmFrontBot...</span></div>
<div class="cr" style="top:134px"><i class="tk"></i><svg class="eye" width="13" height="9" viewBox="0 0 13 9"><path d="M0.3 4.5C2 1.3 4.2 0 6.5 0S11 1.3 12.7 4.5C11 7.7 8.8 9 6.5 9S2 7.7 0.3 4.5Z" fill="#8f8f8f"/><circle cx="6.5" cy="4.5" r="2.6" fill="#fff"/><circle cx="6.5" cy="4.5" r="1.5" fill="#8f8f8f"/></svg><svg class="face" width="8" height="13" viewBox="0 0 8 13"><path d="M0 0L7 5V12.5L0 8.5Z" fill="#8c8c8c"/></svg><span>AarmFrontBot...</span></div>
<div class="cr" style="top:159px"><i class="tk"></i><svg class="eye" width="13" height="9" viewBox="0 0 13 9"><path d="M0.3 4.5C2 1.3 4.2 0 6.5 0S11 1.3 12.7 4.5C11 7.7 8.8 9 6.5 9S2 7.7 0.3 4.5Z" fill="#8f8f8f"/><circle cx="6.5" cy="4.5" r="2.6" fill="#fff"/><circle cx="6.5" cy="4.5" r="1.5" fill="#8f8f8f"/></svg><svg class="face" width="8" height="13" viewBox="0 0 8 13"><path d="M0 0L7 5V12.5L0 8.5Z" fill="#8c8c8c"/></svg><span>AarmFrontTop</span></div>
<div class="cr" style="top:184px"><i class="tk"></i><svg class="eye" width="13" height="9" viewBox="0 0 13 9"><path d="M0.3 4.5C2 1.3 4.2 0 6.5 0S11 1.3 12.7 4.5C11 7.7 8.8 9 6.5 9S2 7.7 0.3 4.5Z" fill="#8f8f8f"/><circle cx="6.5" cy="4.5" r="2.6" fill="#fff"/><circle cx="6.5" cy="4.5" r="1.5" fill="#8f8f8f"/></svg><svg class="face" width="8" height="13" viewBox="0 0 8 13"><path d="M0 0L7 5V12.5L0 8.5Z" fill="#8c8c8c"/></svg><span>AarmFrontTop2</span></div>
<div class="cr" style="top:209px"><i class="tk"></i><svg class="eye" width="13" height="9" viewBox="0 0 13 9"><path d="M0.3 4.5C2 1.3 4.2 0 6.5 0S11 1.3 12.7 4.5C11 7.7 8.8 9 6.5 9S2 7.7 0.3 4.5Z" fill="#8f8f8f"/><circle cx="6.5" cy="4.5" r="2.6" fill="#fff"/><circle cx="6.5" cy="4.5" r="1.5" fill="#8f8f8f"/></svg><svg class="face" width="8" height="13" viewBox="0 0 8 13"><path d="M0 0L7 5V12.5L0 8.5Z" fill="#8c8c8c"/></svg><span>AarmRearBott...</span></div>
<div class="cr" style="top:234px"><i class="tk"></i><svg class="eye" width="13" height="9" viewBox="0 0 13 9"><path d="M0.3 4.5C2 1.3 4.2 0 6.5 0S11 1.3 12.7 4.5C11 7.7 8.8 9 6.5 9S2 7.7 0.3 4.5Z" fill="#8f8f8f"/><circle cx="6.5" cy="4.5" r="2.6" fill="#fff"/><circle cx="6.5" cy="4.5" r="1.5" fill="#8f8f8f"/></svg><svg class="face" width="8" height="13" viewBox="0 0 8 13"><path d="M0 0L7 5V12.5L0 8.5Z" fill="#8c8c8c"/></svg><span>AarmRearBott...</span></div>
<div class="cr" style="top:259px"><i class="tk"></i><svg class="eye" width="13" height="9" viewBox="0 0 13 9"><path d="M0.3 4.5C2 1.3 4.2 0 6.5 0S11 1.3 12.7 4.5C11 7.7 8.8 9 6.5 9S2 7.7 0.3 4.5Z" fill="#8f8f8f"/><circle cx="6.5" cy="4.5" r="2.6" fill="#fff"/><circle cx="6.5" cy="4.5" r="1.5" fill="#8f8f8f"/></svg><svg class="face" width="8" height="13" viewBox="0 0 8 13"><path d="M0 0L7 5V12.5L0 8.5Z" fill="#8c8c8c"/></svg><span>AarmRearUpper</span></div>
<div class="cr" style="top:284px"><i class="tk"></i><svg class="eye" width="13" height="9" viewBox="0 0 13 9"><path d="M0.3 4.5C2 1.3 4.2 0 6.5 0S11 1.3 12.7 4.5C11 7.7 8.8 9 6.5 9S2 7.7 0.3 4.5Z" fill="#8f8f8f"/><circle cx="6.5" cy="4.5" r="2.6" fill="#fff"/><circle cx="6.5" cy="4.5" r="1.5" fill="#8f8f8f"/></svg><svg class="face" width="8" height="13" viewBox="0 0 8 13"><path d="M0 0L7 5V12.5L0 8.5Z" fill="#8c8c8c"/></svg><span>AarmRearUpp...</span></div>
<div class="cr" style="top:309px"><i class="tk"></i><svg class="eye" width="13" height="9" viewBox="0 0 13 9"><path d="M0.3 4.5C2 1.3 4.2 0 6.5 0S11 1.3 12.7 4.5C11 7.7 8.8 9 6.5 9S2 7.7 0.3 4.5Z" fill="#8f8f8f"/><circle cx="6.5" cy="4.5" r="2.6" fill="#fff"/><circle cx="6.5" cy="4.5" r="1.5" fill="#8f8f8f"/></svg><svg class="face" width="8" height="13" viewBox="0 0 8 13"><path d="M0 0L7 5V12.5L0 8.5Z" fill="#8c8c8c"/></svg><span>ContactPatchFL</span></div>
<div class="cr" style="top:334px"><i class="tk"></i><svg class="eye" width="13" height="9" viewBox="0 0 13 9"><path d="M0.3 4.5C2 1.3 4.2 0 6.5 0S11 1.3 12.7 4.5C11 7.7 8.8 9 6.5 9S2 7.7 0.3 4.5Z" fill="#8f8f8f"/><circle cx="6.5" cy="4.5" r="2.6" fill="#fff"/><circle cx="6.5" cy="4.5" r="1.5" fill="#8f8f8f"/></svg><svg class="face" width="8" height="13" viewBox="0 0 8 13"><path d="M0 0L7 5V12.5L0 8.5Z" fill="#8c8c8c"/></svg><span>ContactPatchFR</span></div>
<div class="cr" style="top:359px"><i class="tk"></i><svg class="eye" width="13" height="9" viewBox="0 0 13 9"><path d="M0.3 4.5C2 1.3 4.2 0 6.5 0S11 1.3 12.7 4.5C11 7.7 8.8 9 6.5 9S2 7.7 0.3 4.5Z" fill="#8f8f8f"/><circle cx="6.5" cy="4.5" r="2.6" fill="#fff"/><circle cx="6.5" cy="4.5" r="1.5" fill="#8f8f8f"/></svg><svg class="face" width="8" height="13" viewBox="0 0 8 13"><path d="M0 0L7 5V12.5L0 8.5Z" fill="#8c8c8c"/></svg><span>ContactPatchRL</span></div>
<div class="cr" style="top:384px"><i class="tk"></i><svg class="eye" width="13" height="9" viewBox="0 0 13 9"><path d="M0.3 4.5C2 1.3 4.2 0 6.5 0S11 1.3 12.7 4.5C11 7.7 8.8 9 6.5 9S2 7.7 0.3 4.5Z" fill="#8f8f8f"/><circle cx="6.5" cy="4.5" r="2.6" fill="#fff"/><circle cx="6.5" cy="4.5" r="1.5" fill="#8f8f8f"/></svg><svg class="face" width="8" height="13" viewBox="0 0 8 13"><path d="M0 0L7 5V12.5L0 8.5Z" fill="#8c8c8c"/></svg><span>ContactPatchRR</span></div>
<div class="cr" style="top:409px"><i class="tk"></i><svg class="eye" width="13" height="9" viewBox="0 0 13 9"><path d="M0.3 4.5C2 1.3 4.2 0 6.5 0S11 1.3 12.7 4.5C11 7.7 8.8 9 6.5 9S2 7.7 0.3 4.5Z" fill="#8f8f8f"/><circle cx="6.5" cy="4.5" r="2.6" fill="#fff"/><circle cx="6.5" cy="4.5" r="1.5" fill="#8f8f8f"/></svg><svg class="face" width="8" height="13" viewBox="0 0 8 13"><path d="M0 0L7 5V12.5L0 8.5Z" fill="#8c8c8c"/></svg><span>MotorFL</span></div>
<div class="cr" style="top:434px"><i class="tk"></i><svg class="eye" width="13" height="9" viewBox="0 0 13 9"><path d="M0.3 4.5C2 1.3 4.2 0 6.5 0S11 1.3 12.7 4.5C11 7.7 8.8 9 6.5 9S2 7.7 0.3 4.5Z" fill="#8f8f8f"/><circle cx="6.5" cy="4.5" r="2.6" fill="#fff"/><circle cx="6.5" cy="4.5" r="1.5" fill="#8f8f8f"/></svg><svg class="face" width="8" height="13" viewBox="0 0 8 13"><path d="M0 0L7 5V12.5L0 8.5Z" fill="#8c8c8c"/></svg><span>MotorFR</span></div>
<div class="cr" style="top:459px"><i class="tk"></i><svg class="eye" width="13" height="9" viewBox="0 0 13 9"><path d="M0.3 4.5C2 1.3 4.2 0 6.5 0S11 1.3 12.7 4.5C11 7.7 8.8 9 6.5 9S2 7.7 0.3 4.5Z" fill="#8f8f8f"/><circle cx="6.5" cy="4.5" r="2.6" fill="#fff"/><circle cx="6.5" cy="4.5" r="1.5" fill="#8f8f8f"/></svg><svg class="face" width="8" height="13" viewBox="0 0 8 13"><path d="M0 0L7 5V12.5L0 8.5Z" fill="#8c8c8c"/></svg><span>MotorRL</span></div>
<div class="cr" style="top:484px"><i class="tk"></i><svg class="eye" width="13" height="9" viewBox="0 0 13 9"><path d="M0.3 4.5C2 1.3 4.2 0 6.5 0S11 1.3 12.7 4.5C11 7.7 8.8 9 6.5 9S2 7.7 0.3 4.5Z" fill="#8f8f8f"/><circle cx="6.5" cy="4.5" r="2.6" fill="#fff"/><circle cx="6.5" cy="4.5" r="1.5" fill="#8f8f8f"/></svg><svg class="face" width="8" height="13" viewBox="0 0 8 13"><path d="M0 0L7 5V12.5L0 8.5Z" fill="#8c8c8c"/></svg><span>MotorRL_16</span></div>
<div class="cr" style="top:509px"><i class="tk"></i><svg class="eye" width="13" height="9" viewBox="0 0 13 9"><path d="M0.3 4.5C2 1.3 4.2 0 6.5 0S11 1.3 12.7 4.5C11 7.7 8.8 9 6.5 9S2 7.7 0.3 4.5Z" fill="#8f8f8f"/><circle cx="6.5" cy="4.5" r="2.6" fill="#fff"/><circle cx="6.5" cy="4.5" r="1.5" fill="#8f8f8f"/></svg><svg class="face" width="8" height="13" viewBox="0 0 8 13"><path d="M0 0L7 5V12.5L0 8.5Z" fill="#8c8c8c"/></svg><span>MRFzoneFL</span></div>
<div class="cr" style="top:534px"><i class="tk"></i><svg class="eye" width="13" height="9" viewBox="0 0 13 9"><path d="M0.3 4.5C2 1.3 4.2 0 6.5 0S11 1.3 12.7 4.5C11 7.7 8.8 9 6.5 9S2 7.7 0.3 4.5Z" fill="#8f8f8f"/><circle cx="6.5" cy="4.5" r="2.6" fill="#fff"/><circle cx="6.5" cy="4.5" r="1.5" fill="#8f8f8f"/></svg><svg class="face" width="8" height="13" viewBox="0 0 8 13"><path d="M0 0L7 5V12.5L0 8.5Z" fill="#8c8c8c"/></svg><span>MRFzoneFR</span></div>
<div class="cr" style="top:559px"><i class="tk"></i><svg class="eye" width="13" height="9" viewBox="0 0 13 9"><path d="M0.3 4.5C2 1.3 4.2 0 6.5 0S11 1.3 12.7 4.5C11 7.7 8.8 9 6.5 9S2 7.7 0.3 4.5Z" fill="#8f8f8f"/><circle cx="6.5" cy="4.5" r="2.6" fill="#fff"/><circle cx="6.5" cy="4.5" r="1.5" fill="#8f8f8f"/></svg><svg class="face" width="8" height="13" viewBox="0 0 8 13"><path d="M0 0L7 5V12.5L0 8.5Z" fill="#8c8c8c"/></svg><span>MRFzoneRL</span></div>
<div class="cr" style="top:584px"><i class="tk"></i><svg class="eye" width="13" height="9" viewBox="0 0 13 9"><path d="M0.3 4.5C2 1.3 4.2 0 6.5 0S11 1.3 12.7 4.5C11 7.7 8.8 9 6.5 9S2 7.7 0.3 4.5Z" fill="#8f8f8f"/><circle cx="6.5" cy="4.5" r="2.6" fill="#fff"/><circle cx="6.5" cy="4.5" r="1.5" fill="#8f8f8f"/></svg><svg class="face" width="8" height="13" viewBox="0 0 8 13"><path d="M0 0L7 5V12.5L0 8.5Z" fill="#8c8c8c"/></svg><span>MRFzoneRR</span></div>
<div class="cr" style="top:609px"><i class="tk"></i><svg class="eye" width="13" height="9" viewBox="0 0 13 9"><path d="M0.3 4.5C2 1.3 4.2 0 6.5 0S11 1.3 12.7 4.5C11 7.7 8.8 9 6.5 9S2 7.7 0.3 4.5Z" fill="#8f8f8f"/><circle cx="6.5" cy="4.5" r="2.6" fill="#fff"/><circle cx="6.5" cy="4.5" r="1.5" fill="#8f8f8f"/></svg><svg class="face" width="8" height="13" viewBox="0 0 8 13"><path d="M0 0L7 5V12.5L0 8.5Z" fill="#8c8c8c"/></svg><span>FrontDampfer...</span></div>
<div class="cr" style="top:634px"><i class="tk"></i><svg class="eye" width="13" height="9" viewBox="0 0 13 9"><path d="M0.3 4.5C2 1.3 4.2 0 6.5 0S11 1.3 12.7 4.5C11 7.7 8.8 9 6.5 9S2 7.7 0.3 4.5Z" fill="#8f8f8f"/><circle cx="6.5" cy="4.5" r="2.6" fill="#fff"/><circle cx="6.5" cy="4.5" r="1.5" fill="#8f8f8f"/></svg><svg class="face" width="8" height="13" viewBox="0 0 8 13"><path d="M0 0L7 5V12.5L0 8.5Z" fill="#8c8c8c"/></svg><span>FrontDampfer...</span></div>
<div class="cr" style="top:659px"><i class="tk"></i><svg class="eye" width="13" height="9" viewBox="0 0 13 9"><path d="M0.3 4.5C2 1.3 4.2 0 6.5 0S11 1.3 12.7 4.5C11 7.7 8.8 9 6.5 9S2 7.7 0.3 4.5Z" fill="#8f8f8f"/><circle cx="6.5" cy="4.5" r="2.6" fill="#fff"/><circle cx="6.5" cy="4.5" r="1.5" fill="#8f8f8f"/></svg><svg class="face" width="8" height="13" viewBox="0 0 8 13"><path d="M0 0L7 5V12.5L0 8.5Z" fill="#8c8c8c"/></svg><span>FrontPushrod1</span></div>
<div class="cr" style="top:684px"><i class="tk"></i><svg class="eye" width="13" height="9" viewBox="0 0 13 9"><path d="M0.3 4.5C2 1.3 4.2 0 6.5 0S11 1.3 12.7 4.5C11 7.7 8.8 9 6.5 9S2 7.7 0.3 4.5Z" fill="#8f8f8f"/><circle cx="6.5" cy="4.5" r="2.6" fill="#fff"/><circle cx="6.5" cy="4.5" r="1.5" fill="#8f8f8f"/></svg><svg class="face" width="8" height="13" viewBox="0 0 8 13"><path d="M0 0L7 5V12.5L0 8.5Z" fill="#8c8c8c"/></svg><span>FrontPushrod2</span></div>
<div class="cr" style="top:709px"><i class="tk"></i><svg class="eye" width="13" height="9" viewBox="0 0 13 9"><path d="M0.3 4.5C2 1.3 4.2 0 6.5 0S11 1.3 12.7 4.5C11 7.7 8.8 9 6.5 9S2 7.7 0.3 4.5Z" fill="#8f8f8f"/><circle cx="6.5" cy="4.5" r="2.6" fill="#fff"/><circle cx="6.5" cy="4.5" r="1.5" fill="#8f8f8f"/></svg><svg class="face" width="8" height="13" viewBox="0 0 8 13"><path d="M0 0L7 5V12.5L0 8.5Z" fill="#8c8c8c"/></svg><span>RearDampferP...</span></div>
</body></html>
